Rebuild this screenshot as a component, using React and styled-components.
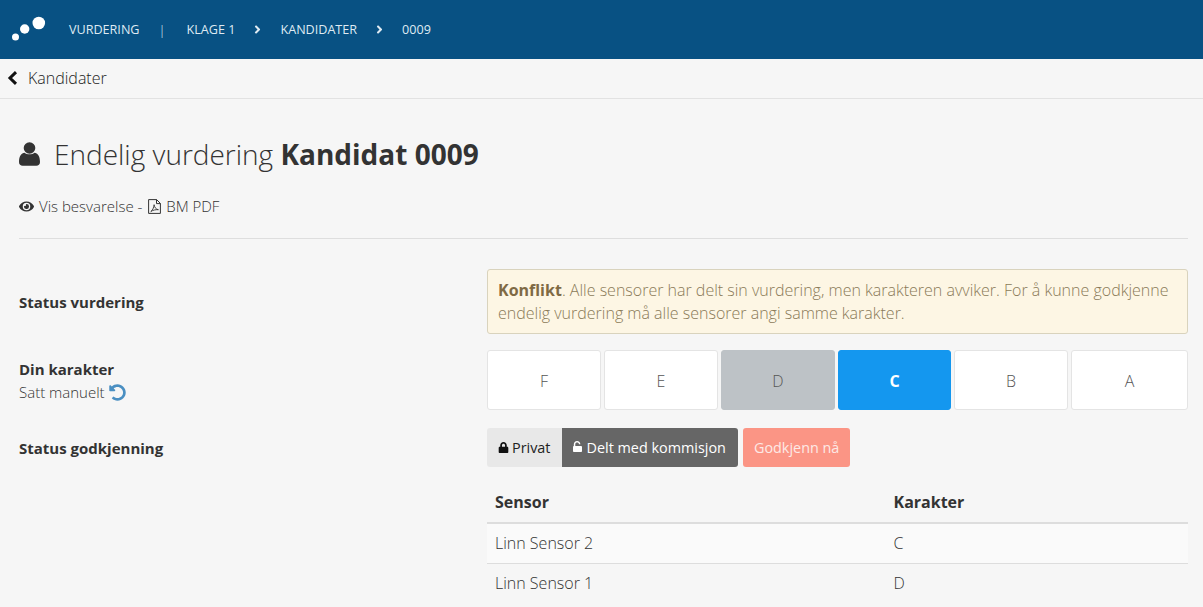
import React from "react";
import styled, { createGlobalStyle } from "styled-components";
import { FaEye, FaLock, FaUndoAlt, FaAngleRight } from "react-icons/fa";

const Global = createGlobalStyle`
  html, body { margin: 0; padding: 0; height: 100%; overflow: hidden; }
  body { background: #f6f6f6; font-family: "Open Sans", "Noto Sans", sans-serif; color: #333; font-size: 15px; font-weight: 300; }
  * { box-sizing: border-box; }
`;

const Header = styled.header`
  height: 59px; background: #085183; color: #dfeaf2; display: flex; align-items: center; padding-left: 12px;
  font-size: 12.6px; font-weight: 400;
`;
const Logo = styled.svg`width: 34px; height: 26px; margin-right: 23px; margin-top: -1px; display: block;`;
const Crumb = styled.span`white-space: nowrap;`;
const Divider = styled.span`margin: 0 21px 0 19px; font-size: 13px; font-weight: 300;`;
const Chevron = styled(FaAngleRight)`margin: 0 16px 0 16px; font-size: 13px;`;

const BackBar = styled.nav`
  height: 40px; border-bottom: 1px solid #e2e2e2; display: flex; align-items: center; padding: 0 0 2px 7px;
  font-size: 16px; color: #222; gap: 10px; font-weight: 300;
`;
const BackIcon = styled.svg`width: 11px; height: 14px; display: block; fill: none; stroke: #111; stroke-width: 3;`;

const Main = styled.main`padding: 0 15px 0 19px;`;
const Title = styled.h1`
  margin: 37px 0 0; height: 36px; display: flex; align-items: center; font-size: 28px; font-weight: 300; color: #333; white-space: pre;
  b { font-weight: 700; }
`;
const UserIcon = styled.svg`width: 21px; height: 24px; margin-right: 14px; fill: #333; display: block;`;
const Links = styled.div`
  margin-top: 24px; display: flex; align-items: center; font-size: 15px; height: 20px; color: #333; white-space: pre;
`;
const Eye = styled(FaEye)`margin-right: 5px; font-size: 15px; color: #333;`;
const PdfIcon = styled.svg`width: 13px; height: 15px; margin: 0 5px 0 2px; display: block; fill: none; stroke: #333;`;
const Rule = styled.hr`margin: 22px 0 30px; border: 0; border-top: 1px solid #dedede;`;

const Row = styled.section`display: grid; grid-template-columns: 468px 1fr; margin-bottom: ${p => p.$gap}px;`;
const Label = styled.div`
  font-weight: 700; font-size: 15px; color: #333; line-height: 20px; padding-top: ${p => p.$top || 0}px;
`;
const Sub = styled.div`font-weight: 300; font-size: 15px; line-height: 20px; display: flex; align-items: center; gap: 4px; margin-top: 3px;`;
const Undo = styled(FaUndoAlt)`font-size: 17px; color: #4a8fc2;`;

const Alert = styled.div`
  height: 65px; background: #fdf6e4; border: 1px solid #d9d3bd; border-radius: 3px; padding: 9px 10px;
  color: #8a7a58; font-size: 16px; line-height: 23px;
  b { font-weight: 700; color: #7f6a45; }
`;
const Grades = styled.div`display: grid; grid-template-columns: 114px 114px 114px 113px 114px 117px; gap: 3px;`;
const Grade = styled.button`
  height: 60px; border-radius: 3px; font: inherit; font-size: 16px; padding: 2px 0 0;
  font-weight: ${p => p.$state === "active" ? 700 : 300};
  background: ${p => p.$state === "active" ? "#1497ef" : p.$state === "other" ? "#bdc2c6" : "#fff"};
  color: ${p => p.$state === "active" ? "#fff" : "#555"};
  border: 1px solid ${p => p.$state === "active" ? "#1497ef" : p.$state === "other" ? "#bdc2c6" : "#e4e4e4"};
`;
const Actions = styled.div`display: flex; height: 39px;`;
const Toggle = styled.span`
  display: flex; align-items: center; gap: ${p => p.$on ? 5 : 3}px; font-weight: 400; font-size: 14.4px; padding: 0 ${p => p.$pad}px 0 11px;
  background: ${p => p.$on ? "#666" : "#e8e8e8"}; color: ${p => p.$on ? "#fff" : "#222"};
  border-radius: ${p => p.$on ? "0 3px 3px 0" : "3px 0 0 3px"};
`;
const SmallLock = styled(FaLock)`font-size: 11px; color: #111;`;
const OpenLock = styled.svg`width: 9px; height: 11px; margin-top: -2px; fill: #fff; display: block;`;
const Approve = styled.button`
  margin-left: 5px; padding: 0 11px; border: 0; border-radius: 3px; background: #fb9585; color: #fde9e5;
  font: inherit; font-weight: 400; font-size: 14.4px;
`;
const Table = styled.table`
  width: 100%; border-collapse: collapse; margin-top: 14px; font-size: 16px; table-layout: fixed;
  th { text-align: left; font-weight: 700; height: 42px; padding: 0 8px; border-bottom: 2px solid #ddd; }
  td { height: 40px; padding: 0 8px; font-weight: 300; }
  tbody tr:first-child td { background: #fafafa; border-bottom: 1px solid #ddd; }
  th:first-child { width: 398.5px; }
`;

export default function App() {
  return (
    <>
      <Global />
      <Header>
        <Logo viewBox="0 0 34 26" aria-hidden="true">
          <circle cx="26.800" cy="7" r="6.300" fill="#fff" />
          <circle cx="12.700" cy="13" r="4.700" fill="#fff" />
          <circle cx="3.500" cy="21" r="3.500" fill="#fff" />
        </Logo>
        <Crumb>VURDERING</Crumb>
        <Divider>|</Divider>
        <Crumb>KLAGE 1</Crumb>
        <Chevron />
        <Crumb>KANDIDATER</Crumb>
        <Chevron />
        <Crumb>0009</Crumb>
      </Header>
      <BackBar>
        <BackIcon viewBox="0 0 11 14" aria-hidden="true"><path d="M9 1.200L3 7l6 5.800" /></BackIcon>
        Kandidater
      </BackBar>
      <Main>
        <Title>
          <UserIcon viewBox="0 0 21 24" aria-hidden="true">
            <circle cx="10.5" cy="6" r="5.8" />
            <path d="M0 20c0-6 2.500-9 5.500-9.300 1.400 1 3 1.600 5 1.600s3.600-.6 5-1.600c3 .3 5.500 3.300 5.500 9.300 0 2.500-1.600 3.700-3.600 3.700H3.600C1.600 23.700 0 22.500 0 20z" />
          </UserIcon>
          Endelig vurdering <b>Kandidat 0009</b>
        </Title>
        <Links>
          <Eye />{"Vis besvarelse - "}
          <PdfIcon viewBox="0 0 13 15" aria-hidden="true">
            <path d="M.6.6h8l3.800 3.800v10H.6zM8.500.6v4h3.900" />
            <path d="M2.800 12.500c1.700-1 3-3.800 3.300-6.800.5 3 2 4.700 4.300 5-2.800-.2-5.400.4-7.600 1.800z" strokeWidth=".9" />
          </PdfIcon>
          BM PDF
        </Links>
        <Rule />
        <Row $gap={16}>
          <Label $top={23}>Status vurdering</Label>
          <Alert><b>Konflikt</b>. Alle sensorer har delt sin vurdering, men karakteren avviker. For å kunne godkjenne endelig vurdering må alle sensorer angi samme karakter.</Alert>
        </Row>
        <Row $gap={18}>
          <Label $top={9}>Din karakter<Sub>Satt manuelt <Undo /></Sub></Label>
          <Grades>
            <Grade>F</Grade>
            <Grade>E</Grade>
            <Grade $state="other">D</Grade>
            <Grade $state="active">C</Grade>
            <Grade>B</Grade>
            <Grade>A</Grade>
          </Grades>
        </Row>
        <Row $gap={0}>
          <Label $top={10}>Status godkjenning</Label>
          <div>
            <Actions>
              <Toggle $pad={11}><SmallLock />Privat</Toggle>
              <Toggle $on $pad={12}>
                <OpenLock viewBox="0 0 11 13" preserveAspectRatio="none" aria-hidden="true">
                  <path d="M1 6V3.800C1 1.600 2.700 0 5 0s4 1.600 4 3.800H7.300C7.300 2.500 6.300 1.700 5 1.700S2.800 2.500 2.800 3.800V6h7.200c.6 0 1 .4 1 1v5c0 .6-.4 1-1 1H1c-.6 0-1-.4-1-1V7c0-.6.4-1 1-1z" />
                </OpenLock>
                Delt med kommisjon
              </Toggle>
              <Approve>Godkjenn nå</Approve>
            </Actions>
            <Table>
              <thead><tr><th>Sensor</th><th>Karakter</th></tr></thead>
              <tbody>
                <tr><td>Linn Sensor 2</td><td>C</td></tr>
                <tr><td>Linn Sensor 1</td><td>D</td></tr>
              </tbody>
            </Table>
          </div>
        </Row>
      </Main>
    </>
  );
}
